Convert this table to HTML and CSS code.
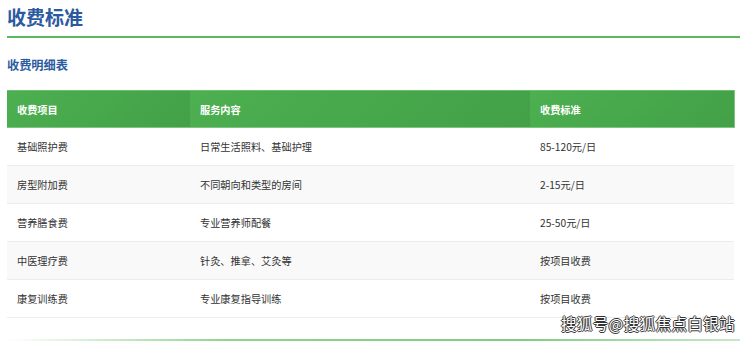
FILE: index.html
```html
<!DOCTYPE html>
<html lang="zh-CN">
<head>
<meta charset="utf-8">
<title>收费标准</title>
<link rel="stylesheet" href="styles.css">
</head>
<body>
<div class="page">
  <h1 class="title">收费标准</h1>
  <h2 class="subtitle">收费明细表</h2>
  <table class="fees">
    <thead>
      <tr>
        <th class="c1">收费项目</th>
        <th class="c2">服务内容</th>
        <th class="c3">收费标准</th>
      </tr>
    </thead>
    <tbody>
      <tr><td>基础照护费</td><td>日常生活照料、基础护理</td><td>85-120元/日</td></tr>
      <tr><td>房型附加费</td><td>不同朝向和类型的房间</td><td>2-15元/日</td></tr>
      <tr><td>营养膳食费</td><td>专业营养师配餐</td><td>25-50元/日</td></tr>
      <tr><td>中医理疗费</td><td>针灸、推拿、艾灸等</td><td>按项目收费</td></tr>
      <tr><td>康复训练费</td><td>专业康复指导训练</td><td>按项目收费</td></tr>
    </tbody>
  </table>
  <div class="bottom-line"></div>
  <div class="watermark">搜狐号@搜狐焦点白银站</div>
</div>
</body>
</html>
```
FILE: styles.css
```css
* { box-sizing: border-box; }
html, body {
  margin: 0;
  padding: 0;
  background: #fff;
}
body {
  font-family: "Noto Sans CJK SC", "Noto Sans", sans-serif;
  color: #333;
}
.page {
  position: relative;
  width: 740px;
  height: 341px;
  padding-left: 7px;
  overflow: hidden;
}
.title {
  margin: 0;
  padding: 5px 0 7px;
  font-size: 19px;
  line-height: 24px;
  font-weight: 700;
  color: #2c5aa0;
  border-bottom: 2px solid #5cb85c;
}
.subtitle {
  margin: 19px 0 17px;
  font-size: 12.2px;
  line-height: 16px;
  font-weight: 700;
  color: #2c5aa0;
}
.fees {
  width: 727px;
  border-collapse: collapse;
  table-layout: fixed;
  font-size: 10.2px;
}
.fees .c1 { width: 183px; }
.fees .c2 { width: 340px; }
.fees .c3 { width: 204px; }
.fees th {
  height: 37px;
  padding: 0 10px;
  text-align: left;
  color: #fff;
  font-weight: 700;
  background: linear-gradient(135deg, #4caf50, #43a047);
  border-top: 1px solid #6cbf6f;
  border-bottom: 1px solid #7cc67f;
}
.fees th.c3 { border-right: 1px solid #7cc67f; }
.fees td {
  height: 38px;
  padding: 0 10px;
  color: #333;
  border-bottom: 1px solid #ececec;
}
.fees tbody tr:nth-child(even) td { background: #f9f9f9; }
.bottom-line {
  margin-top: 21px;
  height: 2px;
  background: linear-gradient(90deg, rgba(76,175,80,0) 0%, #8fd48f 30%, #7fcc82 70%, rgba(76,175,80,0.3) 100%);
}
.watermark {
  position: absolute;
  right: 5px;
  top: 313px;
  font-size: 15.5px;
  line-height: 20px;
  color: #fff;
  letter-spacing: 0.4px;
  text-shadow: 1px 0 0 #333, -1px 0 0 #333, 0 1px 0 #333, 0 -1px 0 #333;
}
```
